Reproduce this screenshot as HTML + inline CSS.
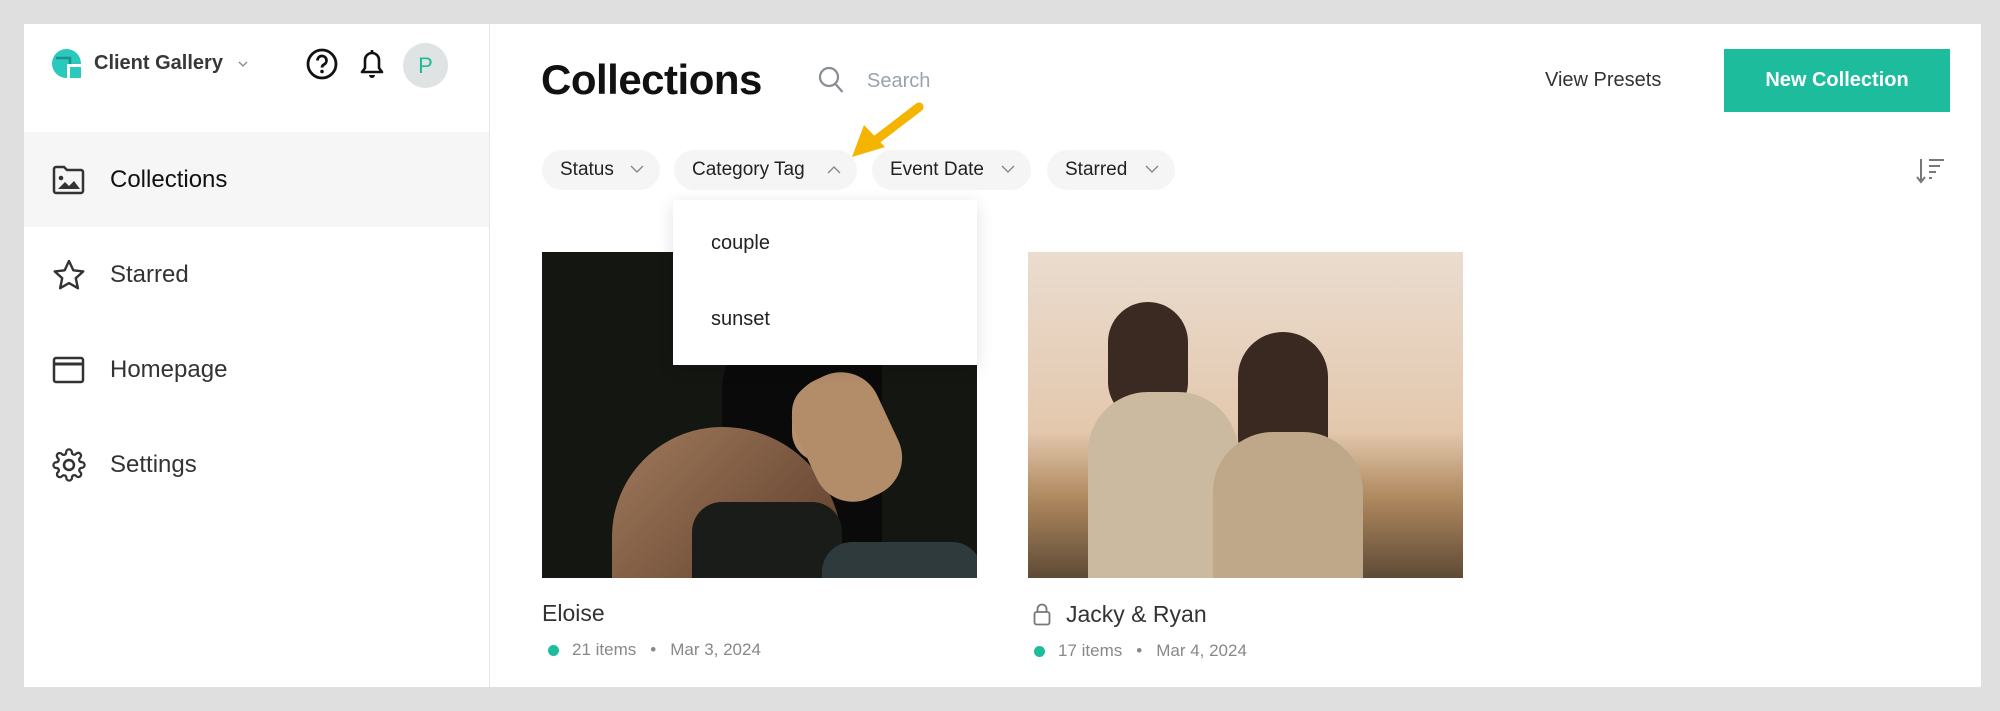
<!DOCTYPE html>
<html><head><meta charset="utf-8"><style>
*{margin:0;padding:0;box-sizing:border-box}
body{width:2000px;height:711px;background:#dfdfdf;font-family:"Liberation Sans",sans-serif;position:relative;overflow:hidden;color:#222}
.panel{position:absolute;left:24px;top:24px;width:1957px;height:663px;background:#fff}
.side{position:absolute;left:24px;top:24px;width:466px;height:663px;border-right:1px solid #e6e6e6}
.a{position:absolute}
.nav{position:absolute;left:24px;width:465px;height:95px;display:flex;align-items:center;font-size:24px;color:#333}
.nav svg{position:absolute;left:28px}
.nav span{position:absolute;left:86px}
.pill{position:absolute;top:150px;height:40px;background:#f5f5f5;border-radius:20px;font-size:19px;color:#222;display:flex;align-items:center;padding-left:18px}
.pill svg{position:absolute;right:16px;top:15px}
.meta{position:absolute;font-size:17px;color:#888;display:flex;align-items:center}
.dot{width:11px;height:11px;border-radius:50%;background:#1dbc9c;margin-right:13px}
</style></head><body>
<div class="panel"></div>
<div class="side"></div>
<svg class="a" style="left:52px;top:49px" width="29" height="29" viewBox="0 0 29 29"><circle cx="14.5" cy="14.5" r="14.5" fill="#29c9bd"/><path d="M4 9h14v14" stroke="#157a73" stroke-width="2.5" fill="none" opacity=".7"/><rect x="15" y="15" width="14" height="14" fill="#fff"/><rect x="18" y="18" width="11" height="11" fill="#29c9bd"/></svg>
<div class="a" style="left:94px;top:52px;font-size:20px;font-weight:bold;color:#383838">Client Gallery</div>
<svg class="a" style="left:238px;top:61px" width="10" height="6"><path d="M1 1l4 4 4-4" stroke="#888" fill="none" stroke-width="1.3"/></svg>
<svg class="a" style="left:306px;top:48px" width="32" height="32" viewBox="0 0 32 32"><circle cx="16" cy="16" r="14" stroke="#111" stroke-width="2.8" fill="none"/><path d="M11.5 12.5a4.5 4.5 0 1 1 6.5 4c-1.5.8-2 1.5-2 3" stroke="#111" stroke-width="2.8" fill="none"/><circle cx="16" cy="23.5" r="1.8" fill="#111"/></svg>
<svg class="a" style="left:358px;top:48px" width="28" height="32" viewBox="0 0 28 32"><path d="M4 24h20l-3-4v-8a7 7 0 0 0-14 0v8z" stroke="#111" stroke-width="2.6" fill="none" stroke-linejoin="round"/><path d="M14 2v3" stroke="#111" stroke-width="2.6"/><path d="M11 27a3 3 0 0 0 6 0z" fill="#111"/></svg>
<div class="a" style="left:403px;top:43px;width:45px;height:45px;border-radius:50%;background:#dfe3e3;color:#1dbc9c;font-size:22px;display:flex;align-items:center;justify-content:center">P</div>
<div class="nav" style="top:132px;background:#f5f6f5"><svg width="33" height="30" viewBox="0 0 33 30"><path d="M2 4a2 2 0 0 1 2-2h8l3 3h14a2 2 0 0 1 2 2v19a2 2 0 0 1-2 2H4a2 2 0 0 1-2-2z" stroke="#333" stroke-width="2.5" fill="none"/><circle cx="9" cy="13" r="2.3" fill="#333"/><path d="M6 24l7-7 4 4 5-5 6 8z" fill="#333"/></svg><span style="color:#111">Collections</span></div>
<div class="nav" style="top:227px"><svg width="34" height="32" viewBox="0 0 34 32"><path d="M17 2l4.3 9.3 10 1.1-7.5 6.8 2.1 10L17 24.1l-8.9 5.1 2.1-10-7.5-6.8 10-1.1z" stroke="#333" stroke-width="2.4" fill="none" stroke-linejoin="round"/></svg><span>Starred</span></div>
<div class="nav" style="top:322px"><svg width="33" height="28" viewBox="0 0 33 28"><rect x="2" y="2" width="29" height="24" rx="2" stroke="#333" stroke-width="2.5" fill="none"/><path d="M2 8h29" stroke="#333" stroke-width="3"/></svg><span>Homepage</span></div>
<div class="nav" style="top:417px"><svg width="34" height="34" viewBox="0 0 24 24"><path d="M12 15.5a3.5 3.5 0 1 0 0-7 3.5 3.5 0 0 0 0 7z" stroke="#333" stroke-width="1.8" fill="none"/><path d="M19.4 15a1.7 1.7 0 0 0 .3 1.8l.1.1a2 2 0 1 1-2.8 2.8l-.1-.1a1.7 1.7 0 0 0-1.8-.3 1.7 1.7 0 0 0-1 1.5V21a2 2 0 1 1-4 0v-.1a1.7 1.7 0 0 0-1.1-1.5 1.7 1.7 0 0 0-1.8.3l-.1.1a2 2 0 1 1-2.8-2.8l.1-.1a1.7 1.7 0 0 0 .3-1.8 1.7 1.7 0 0 0-1.5-1H3a2 2 0 1 1 0-4h.1a1.7 1.7 0 0 0 1.5-1.100 1.7 1.7 0 0 0-.3-1.8l-.1-.1a2 2 0 1 1 2.8-2.8l.1.1a1.7 1.7 0 0 0 1.8.3H9a1.7 1.7 0 0 0 1-1.5V3a2 2 0 1 1 4 0v.1a1.7 1.7 0 0 0 1 1.5 1.7 1.7 0 0 0 1.8-.3l.1-.1a2 2 0 1 1 2.8 2.8l-.1.1a1.7 1.7 0 0 0-.3 1.8V9a1.7 1.7 0 0 0 1.5 1H21a2 2 0 1 1 0 4h-.1a1.7 1.7 0 0 0-1.5 1z" stroke="#333" stroke-width="1.6" fill="none"/></svg><span>Settings</span></div>
<div class="a" style="left:541px;top:56px;font-size:42px;font-weight:bold;color:#111;letter-spacing:-0.5px">Collections</div>
<svg class="a" style="left:818px;top:66px" width="28" height="30" viewBox="0 0 28 30"><circle cx="11" cy="11" r="9" stroke="#8a8f95" stroke-width="2.3" fill="none"/><path d="M17.5 18l7 8" stroke="#8a8f95" stroke-width="2.3"/></svg>
<div class="a" style="left:867px;top:70px;font-size:20px;color:#9aa3ad">Search</div>
<div class="a" style="left:1545px;top:69px;font-size:20px;color:#333">View Presets</div>
<div class="a" style="left:1724px;top:49px;width:226px;height:63px;background:#1dbc9c;color:#fff;font-size:20px;font-weight:bold;display:flex;align-items:center;justify-content:center">New Collection</div>
<div class="pill" style="left:542px;width:118px">Status<svg width="14" height="9"><path d="M1 1l6 6 6-6" stroke="#888" fill="none" stroke-width="1.4"/></svg></div>
<div class="pill" style="left:674px;width:183px">Category Tag<svg width="14" height="9"><path d="M1 8l6-6 6 6" stroke="#888" fill="none" stroke-width="1.4"/></svg></div>
<div class="pill" style="left:872px;width:159px">Event Date<svg width="14" height="9"><path d="M1 1l6 6 6-6" stroke="#888" fill="none" stroke-width="1.4"/></svg></div>
<div class="pill" style="left:1047px;width:128px">Starred<svg width="14" height="9"><path d="M1 1l6 6 6-6" stroke="#888" fill="none" stroke-width="1.4"/></svg></div>
<svg class="a" style="left:1916px;top:157px" width="30" height="27" viewBox="0 0 30 27"><path d="M5 2v22M1 20l4 5 4-5" stroke="#777" stroke-width="2" fill="none"/><path d="M13 3h15M13 9h11M13 15h7M13 21h3" stroke="#777" stroke-width="2"/></svg>
<div class="a" style="left:542px;top:252px;width:435px;height:326px;background:#141612;overflow:hidden">
<div class="a" style="left:180px;top:60px;width:160px;height:300px;border-radius:80px 60px 0 0;background:#0a0a0a"></div>
<div class="a" style="left:70px;top:175px;width:230px;height:170px;border-radius:110px 120px 0 0;background:linear-gradient(135deg,#a07a5c,#5a3a28)"></div>
<div class="a" style="left:250px;top:130px;width:60px;height:80px;border-radius:30px;background:#b8906e"></div>
<div class="a" style="left:260px;top:120px;width:90px;height:130px;border-radius:40px;background:#b38c6a;transform:rotate(-25deg)"></div>
<div class="a" style="left:150px;top:250px;width:150px;height:90px;background:#1a1c1a;border-radius:30px 30px 0 0"></div>
<div class="a" style="left:280px;top:290px;width:160px;height:50px;background:#2e3a3c;border-radius:30px 30px 0 0"></div>
</div>
<div class="a" style="left:1028px;top:252px;width:435px;height:326px;background:linear-gradient(180deg,#eadccf 0%,#e3c8ad 55%,#b08a60 75%,#5e4a35 100%);overflow:hidden">
<div class="a" style="left:80px;top:50px;width:80px;height:120px;border-radius:40px;background:#3a2a22"></div>
<div class="a" style="left:60px;top:140px;width:150px;height:200px;border-radius:60px 60px 0 0;background:#cbb9a0"></div>
<div class="a" style="left:210px;top:80px;width:90px;height:150px;border-radius:45px;background:#3a2920"></div>
<div class="a" style="left:185px;top:180px;width:150px;height:160px;border-radius:60px 60px 0 0;background:#bfa78a"></div>
</div>
<div class="a" style="left:673px;top:200px;width:304px;height:165px;background:#fff;box-shadow:0 4px 16px rgba(0,0,0,.12)"></div>
<div class="a" style="left:711px;top:232px;font-size:20px;color:#222">couple</div>
<div class="a" style="left:711px;top:308px;font-size:20px;color:#222">sunset</div>
<svg class="a" style="left:840px;top:95px" width="100" height="75" viewBox="0 0 100 75"><path d="M79 12 L36 45" stroke="#f5b400" stroke-width="9" fill="none" stroke-linecap="round"/><path d="M12 62 L24 30 L45 52 Z" fill="#f5b400"/></svg>
<div class="a" style="left:542px;top:600px;font-size:23px;color:#333">Eloise</div>
<div class="meta" style="left:548px;top:640px"><span class="dot"></span>21 items<span style="margin:0 14px">•</span>Mar 3, 2024</div>
<svg class="a" style="left:1033px;top:603px" width="18" height="23" viewBox="0 0 18 23"><rect x="1.5" y="9" width="15" height="12.5" rx="2" stroke="#777" stroke-width="1.8" fill="none"/><path d="M4.5 9V6a4.5 4.5 0 0 1 9 0v3" stroke="#777" stroke-width="1.8" fill="none"/></svg>
<div class="a" style="left:1066px;top:601px;font-size:23px;color:#333">Jacky &amp; Ryan</div>
<div class="meta" style="left:1034px;top:641px"><span class="dot"></span>17 items<span style="margin:0 14px">•</span>Mar 4, 2024</div>
</body></html>
